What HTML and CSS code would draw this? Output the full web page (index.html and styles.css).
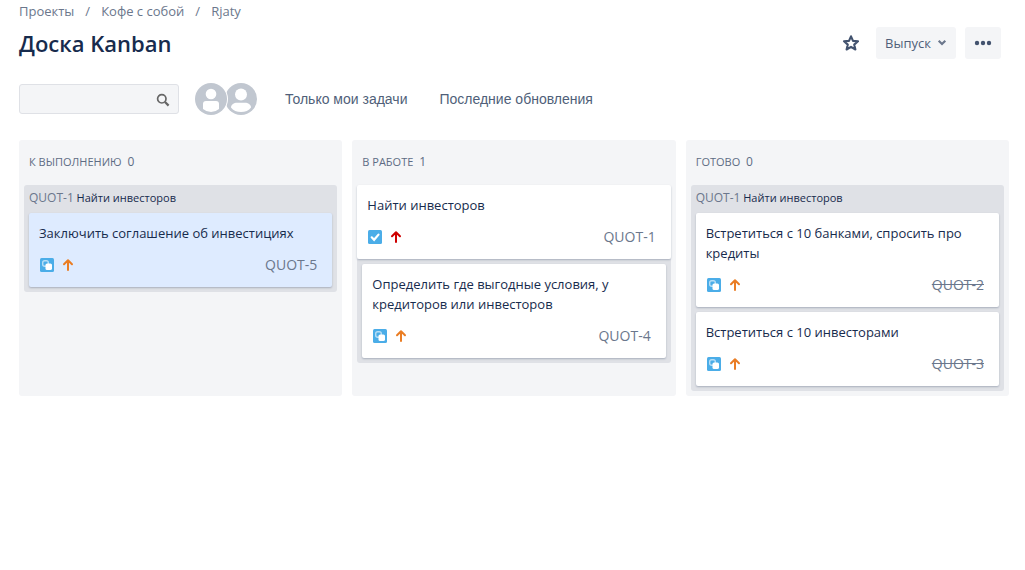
FILE: index.html
```html
<!DOCTYPE html>
<html lang="ru">
<head>
<meta charset="utf-8">
<meta name="viewport" content="width=device-width, initial-scale=1">
<title>Доска Kanban</title>
<link rel="stylesheet" href="styles.css">
</head>
<body>
<svg class="sprite" aria-hidden="true">
  <symbol id="subtask" viewBox="0 0 16 16">
    <rect x="1" y="1" width="14" height="14" rx="1.5" fill="#4bade8"/>
    <rect x="3.7" y="3.7" width="5.6" height="5.6" rx="2" fill="none" stroke="#b7def6" stroke-width="1.4"/>
    <rect x="6.5" y="6.5" width="6.5" height="6.5" rx="1.6" fill="#fff"/>
  </symbol>
  <symbol id="task" viewBox="0 0 16 16">
    <rect x="1" y="1" width="14" height="14" rx="1.5" fill="#4bade8"/>
    <path d="M4.7 8.3l2.4 2.5 4.4-5.2" fill="none" stroke="#fff" stroke-width="2.2" stroke-linecap="round"/>
  </symbol>
  <symbol id="arrow" viewBox="0 0 16 16">
    <path d="M8 13V3.5M4 7.2L8 3.2 12 7.2" fill="none" stroke="currentColor" stroke-width="2" stroke-linecap="round" stroke-linejoin="round"/>
  </symbol>
</svg>

<header class="page-header">
  <nav class="breadcrumbs" aria-label="Навигация">
    <a href="#">Проекты</a><span>/</span><a href="#">Кофе с собой</a><span>/</span><a href="#">Rjaty</a>
  </nav>
  <div class="title-row">
    <h1 class="title">Доска Kanban</h1>
    <div class="actions">
      <button class="button star" type="button" aria-label="В избранное">
        <svg width="18" height="18" viewBox="0 0 18 18"><path d="M9 2.3l2 4.6 5 .4-3.8 3.3 1.2 4.9L9 12.9l-4.4 2.6 1.2-4.9L2 7.3l5-.4z" fill="none" stroke="#42526e" stroke-width="2.1" stroke-linejoin="round"/></svg>
      </button>
      <button class="button" type="button">Выпуск
        <svg width="10" height="8" viewBox="0 0 10 8"><path d="M1.7 1.8L5 5l3.3-3.2" fill="none" stroke="#6b778c" stroke-width="2.2"/></svg>
      </button>
      <button class="button more" type="button" aria-label="Ещё">
        <svg width="18" height="6" viewBox="0 0 18 6" fill="#42526e"><circle cx="3" cy="3" r="2.2"/><circle cx="9" cy="3" r="2.2"/><circle cx="15" cy="3" r="2.2"/></svg>
      </button>
    </div>
  </div>
</header>

<div class="filters">
  <div class="search">
    <input class="search-input" type="text" aria-label="Поиск">
    <svg class="search-icon" width="14" height="14" viewBox="0 0 14 14"><circle cx="5.8" cy="5.8" r="4.2" fill="none" stroke="#666" stroke-width="1.7"/><path d="M9 9l3.6 3.6" stroke="#666" stroke-width="2.2"/></svg>
  </div>
  <div class="avatars">
    <svg class="avatar" viewBox="0 0 34 34"><circle cx="17" cy="17" r="17" fill="#fff"/><circle cx="17" cy="17" r="16" fill="#c1c7d0"/><circle cx="17" cy="12" r="5.3" fill="#fff"/><path d="M9 22a3 3 0 0 1 3-3h10a3 3 0 0 1 3 3v5Q21.5 30 17 30T9 27z" fill="#fff"/></svg>
    <svg class="avatar" viewBox="0 0 34 34"><circle cx="17" cy="17" r="17" fill="#fff"/><circle cx="17" cy="17" r="16" fill="#c1c7d0"/><circle cx="17" cy="12.5" r="6" fill="#fff"/><path d="M7 25.5c0-3 3-4.8 6-4.8h8c3 0 6 1.8 6 4.8-2 3-6 4.5-10 4.5s-8-1.5-10-4.5z" fill="#fff"/></svg>
  </div>
  <div class="quick">
    <button class="quick-filter" type="button">Только мои задачи</button>
    <button class="quick-filter" type="button">Последние обновления</button>
  </div>
</div>

<main class="board">
  <section class="column">
    <h2 class="column-title">К ВЫПОЛНЕНИЮ <span class="count">0</span></h2>
    <div class="group">
      <div class="group-title"><a class="parent-key" href="#">QUOT-1</a> Найти инвесторов</div>
      <article class="card selected">
        <div class="summary">Заключить соглашение об инвестициях</div>
        <div class="meta"><svg class="icon"><use href="#subtask"/></svg><svg class="icon medium"><use href="#arrow"/></svg><a class="key" href="#">QUOT-5</a></div>
      </article>
    </div>
  </section>
  <section class="column">
    <h2 class="column-title">В РАБОТЕ <span class="count">1</span></h2>
    <article class="card">
      <div class="summary">Найти инвесторов</div>
      <div class="meta"><svg class="icon"><use href="#task"/></svg><svg class="icon high"><use href="#arrow"/></svg><a class="key" href="#">QUOT-1</a></div>
    </article>
    <div class="group children">
      <article class="card">
        <div class="summary">Определить где выгодные условия, у кредиторов или инвесторов</div>
        <div class="meta"><svg class="icon"><use href="#subtask"/></svg><svg class="icon medium"><use href="#arrow"/></svg><a class="key" href="#">QUOT-4</a></div>
      </article>
    </div>
  </section>
  <section class="column">
    <h2 class="column-title">ГОТОВО <span class="count">0</span></h2>
    <div class="group">
      <div class="group-title"><a class="parent-key" href="#">QUOT-1</a> Найти инвесторов</div>
      <article class="card">
        <div class="summary">Встретиться с 10 банками, спросить про кредиты</div>
        <div class="meta"><svg class="icon"><use href="#subtask"/></svg><svg class="icon medium"><use href="#arrow"/></svg><a class="key done" href="#">QUOT-2</a></div>
      </article>
      <article class="card">
        <div class="summary">Встретиться с 10 инвесторами</div>
        <div class="meta"><svg class="icon"><use href="#subtask"/></svg><svg class="icon medium"><use href="#arrow"/></svg><a class="key done" href="#">QUOT-3</a></div>
      </article>
    </div>
  </section>
</main>
</body>
</html>
```

FILE: styles.css
```css
* {
  box-sizing: border-box;
}

body {
  margin: 0;
  padding: 1px 16px 16px 19px;
  background: #fff;
  color: #172b4d;
  font: 13px/20px "Open Sans", "Noto Sans", sans-serif;
}

a {
  color: #6b778c;
  text-decoration: none;
}

button {
  font: inherit;
  cursor: pointer;
}

.sprite {
  display: none;
}

.breadcrumbs {
  display: flex;
  gap: 11px;
  color: #6b778c;
}

.title-row {
  display: flex;
  align-items: center;
  justify-content: space-between;
  padding: 6px 8px 0 0;
}

.title {
  margin: 0;
  font-size: 22px;
  line-height: 32px;
  font-weight: 600;
}

.actions {
  display: flex;
  gap: 9px;
}

.button {
  display: flex;
  align-items: center;
  justify-content: center;
  gap: 6px;
  height: 32px;
  padding: 0 9px;
  border: 0;
  border-radius: 3px;
  background: #f4f5f7;
  color: #505f79;
}

.star {
  width: 32px;
  padding: 0;
  background: none;
}

.filters {
  display: flex;
  align-items: center;
  padding-top: 23px;
}

.search {
  position: relative;
  width: 160px;
}

.search-input {
  display: block;
  width: 100%;
  height: 30px;
  padding: 0 28px 0 8px;
  border: 1px solid #dfe1e6;
  border-radius: 3px;
  background: #f4f5f7;
  color: inherit;
  font: inherit;
}

.search-icon {
  position: absolute;
  top: 9px;
  right: 9px;
}

.avatars {
  display: flex;
  margin-left: 15px;
}

.avatar {
  width: 34px;
  height: 34px;
}

.avatar + .avatar {
  margin-left: -4px;
}

.avatar:first-child {
  z-index: 1;
}

.quick {
  display: flex;
  gap: 32px;
  margin-left: 27px;
}

.quick-filter {
  padding: 0;
  border: 0;
  background: none;
  color: #505f79;
  font-family: "Liberation Sans", sans-serif;
  font-size: 14px;
}

.board {
  display: grid;
  grid-template-columns: repeat(3, minmax(0, 1fr));
  gap: 10px;
  padding-top: 24px;
}

.column {
  padding: 0 5px 5px;
  border-radius: 3px;
  background: #f4f5f7;
}

.column-title {
  margin: 0;
  padding: 12px 5px 13px;
  color: #5e6c84;
  font-size: 11px;
  line-height: 20px;
  font-weight: 400;
}

.count {
  margin-left: 3px;
  font-size: 12px;
}

.group {
  display: flex;
  flex-direction: column;
  gap: 5px;
  padding: 0 5px 5px;
  border-radius: 3px;
  background: #dfe1e6;
}

.children {
  padding-top: 5px;
  border-radius: 0 0 3px 3px;
}

.group-title {
  height: 23px;
  padding-top: 3px;
  font-size: 11px;
}

.parent-key {
  font-size: 12px;
}

.card {
  position: relative;
  padding: 10px 15px 12px 10px;
  border-radius: 2px;
  background: #fff;
  box-shadow: 0 1px 2px rgba(9, 30, 66, 0.25);
}

.selected {
  background: #deebff;
}

.meta {
  display: flex;
  align-items: center;
  gap: 5px;
  padding-top: 12px;
}

.icon {
  width: 16px;
  height: 16px;
}

.medium {
  color: #ea7d24;
}

.high {
  color: #ce0000;
}

.key {
  margin-left: auto;
  font-size: 14px;
}

.done {
  text-decoration: line-through;
}
```
